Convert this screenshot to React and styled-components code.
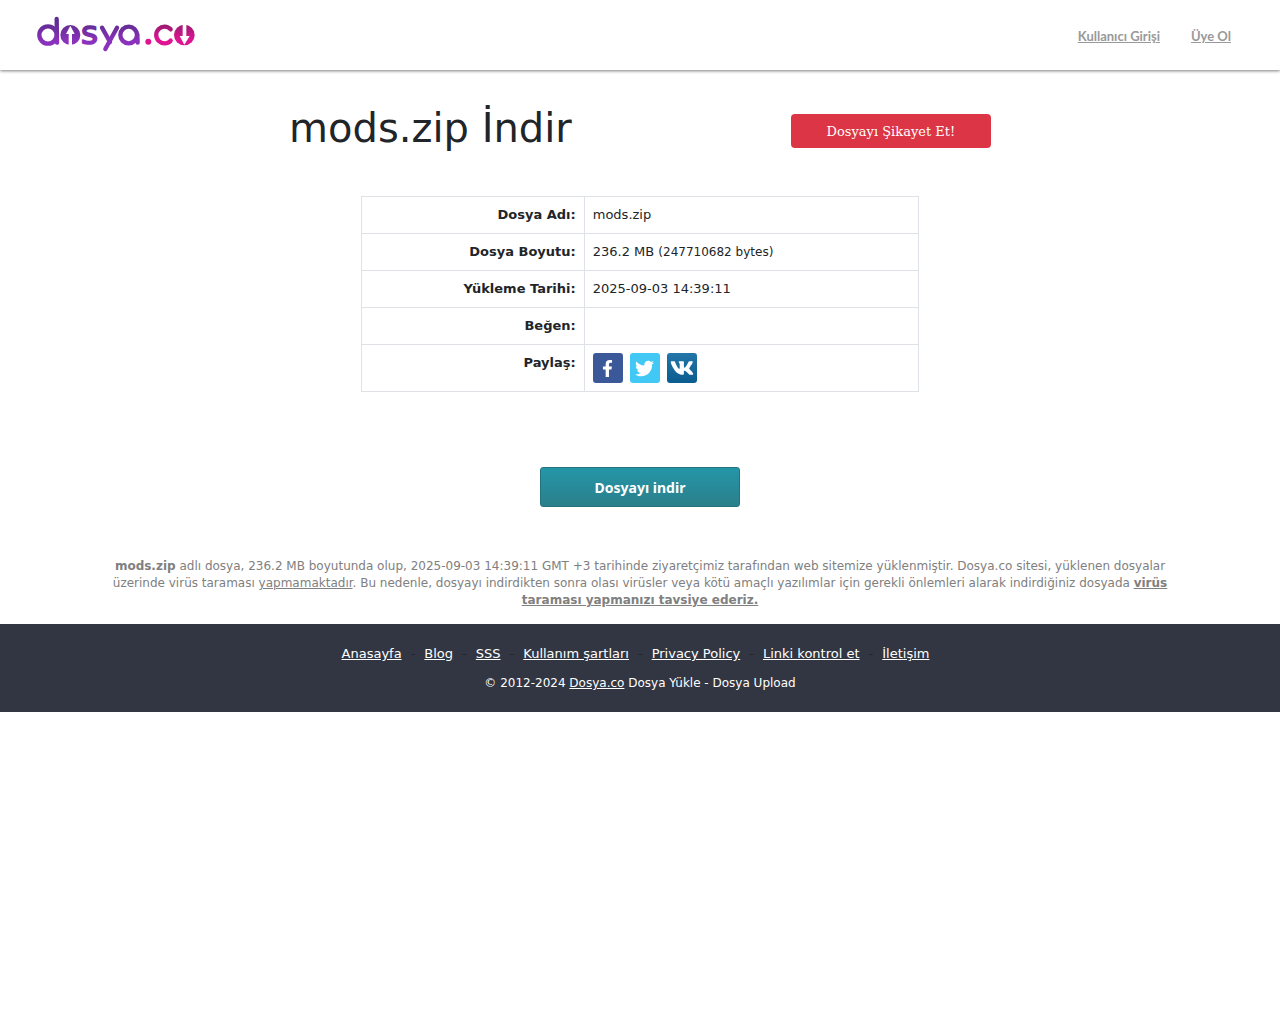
import React from 'react';
import styled, { createGlobalStyle } from 'styled-components';
import { FaFacebookF, FaTwitter, FaVk } from 'react-icons/fa';

const GlobalStyle = createGlobalStyle`
    body {
        margin: 0;
        background: #fff;
        color: #212529;
        font-family: 'DejaVu Sans', sans-serif;
        font-size: 13px;
        line-height: 20px;
    }
`;

const Header = styled.header`
    display: flex;
    align-items: center;
    justify-content: space-between;
    height: 70px;
    padding: 0 49px 0 36px;
    box-sizing: border-box;
    box-shadow: 0 1px 3px rgba(0, 0, 0, 0.5);
`;

const LogoLink = styled.a`
    display: block;
    height: 38px;
`;

const LogoSvg = styled.svg`
    overflow: visible;
`;

const UserNav = styled.nav`
    display: flex;
    gap: 31px;
    padding-top: 2px;
`;

const UserLink = styled.a`
    color: #999;
    font-family: Lato, sans-serif;
    font-size: 13px;
    font-weight: bold;
`;

const Container = styled.main`
    max-width: 1140px;
    margin: 0 auto;
    padding-top: 34px;
`;

const TitleRow = styled.div`
    display: flex;
    align-items: center;
    justify-content: space-evenly;
    margin-bottom: 38px;
`;

const Title = styled.h1`
    margin: 0;
    padding-bottom: 6px;
    font-size: 40px;
    font-weight: normal;
    line-height: 48px;
`;

const ReportButton = styled.button`
    width: 200px;
    height: 34px;
    border: 0;
    border-radius: 4px;
    background: #dc3545;
    color: #fff;
    font-family: 'DejaVu Serif', serif;
    font-size: 13px;
    cursor: pointer;
`;

const FileTable = styled.table`
    width: 49%;
    margin: 0 auto 75px;
    border-collapse: collapse;
    table-layout: fixed;
`;

const Label = styled.th`
    width: 40%;
    padding: 8px;
    border: 1px solid #dee2e6;
    box-sizing: border-box;
    text-align: right;
    vertical-align: top;
`;

const Value = styled.td`
    padding: 8px;
    border: 1px solid #dee2e6;
`;

const Small = styled.small`
    font-size: 12px;
`;

const ShareList = styled.div`
    display: flex;
    gap: 7px;
`;

const ShareLink = styled.a`
    display: flex;
    align-items: center;
    justify-content: center;
    width: 30px;
    height: 30px;
    border-radius: 3px;
    background: ${({ $bg }) => $bg};
    color: #fff;
`;

const DownloadButton = styled.button`
    display: block;
    width: 200px;
    height: 40px;
    margin: 0 auto 51px;
    border: 1px solid #24727d;
    border-radius: 3px;
    background: linear-gradient(#2496a8, #2b7f8b);
    color: #fff;
    font-family: 'Noto Sans', sans-serif;
    font-size: 14px;
    font-weight: bold;
    cursor: pointer;
`;

const Notice = styled.p`
    margin: 0;
    padding: 0 34px 15px;
    color: #808080;
    font-size: 12px;
    line-height: 17px;
    text-align: center;
`;

const Footer = styled.footer`
    padding: 20px 0 19px;
    background: #323642;
    color: #fff;
    text-align: center;
`;

const FooterLinks = styled.nav`
    display: flex;
    flex-wrap: wrap;
    justify-content: center;
    gap: 9px;
    padding-right: 9px;
    margin-bottom: 9px;
    color: #212529;
`;

const FooterLink = styled.a`
    color: #fff;
`;

const Copyright = styled.p`
    margin: 0;
    font-size: 12px;
`;

const menu = ['Anasayfa', 'Blog', 'SSS', 'Kullanım şartları', 'Privacy Policy', 'Linki kontrol et', 'İletişim'];

function Logo() {
    return (
        <LogoSvg width="160" height="38" viewBox="48 48 480 114" role="img" aria-label="dosya.co">
            <defs>
                <linearGradient id="purple" x1="0" y1="50" x2="0" y2="150" gradientUnits="userSpaceOnUse">
                    <stop offset="0.2" stopColor="#612d91" />
                    <stop offset="0.75" stopColor="#8b32bd" />
                </linearGradient>
                <linearGradient id="pink" x1="0" y1="76" x2="0" y2="136" gradientUnits="userSpaceOnUse">
                    <stop offset="0" stopColor="#9c1b71" />
                    <stop offset="0.7" stopColor="#df1493" />
                </linearGradient>
            </defs>
            <g fill="none" stroke="url(#purple)" strokeWidth="13" strokeLinecap="round">
                <circle cx="84" cy="105" r="26" />
                <line x1="110" y1="57" x2="111" y2="128" />
                <line x1="246" y1="83" x2="270" y2="126" />
                <line x1="291" y1="83" x2="256" y2="147" />
                <circle cx="326" cy="105" r="25" />
                <line x1="352" y1="103" x2="353" y2="128" />
            </g>
            <text x="183" y="132" fontFamily="DejaVu Sans, sans-serif" fontSize="98" fill="url(#purple)" stroke="url(#purple)" strokeWidth="5" strokeLinejoin="round">s</text>
            {/* upload arrow */}
            <circle cx="151" cy="105" r="30" fill="url(#purple)" />
            <path d="M151 77 L164 102 H156 V136 H146 V102 H138 Z" fill="#fff" />
            <circle cx="385" cy="125" r="9" fill="url(#pink)" />
            <path d="M452 88 A25 25 0 1 0 452 122" fill="none" stroke="url(#pink)" strokeWidth="13" strokeLinecap="round" />
            {/* download arrow */}
            <circle cx="493" cy="105" r="31" fill="url(#pink)" />
            <path d="M488 72 H499 V108 H509 L493 134 L479 108 H488 Z" fill="#fff" />
        </LogoSvg>
    );
}

export default function App() {
    return (
        <>
            <GlobalStyle />
            <Header>
                <LogoLink href="#"><Logo /></LogoLink>
                <UserNav>
                    <UserLink href="#">Kullanıcı Girişi</UserLink>
                    <UserLink href="#">Üye Ol</UserLink>
                </UserNav>
            </Header>
            <Container>
                <TitleRow>
                    <Title>mods.zip İndir</Title>
                    <ReportButton type="button">Dosyayı Şikayet Et!</ReportButton>
                </TitleRow>
                <FileTable>
                    <tbody>
                        <tr>
                            <Label scope="row">Dosya Adı:</Label>
                            <Value>mods.zip</Value>
                        </tr>
                        <tr>
                            <Label scope="row">Dosya Boyutu:</Label>
                            <Value>236.2 MB <Small>(247710682 bytes)</Small></Value>
                        </tr>
                        <tr>
                            <Label scope="row">Yükleme Tarihi:</Label>
                            <Value>2025-09-03 14:39:11</Value>
                        </tr>
                        <tr>
                            <Label scope="row">Beğen:</Label>
                            <Value />
                        </tr>
                        <tr>
                            <Label scope="row">Paylaş:</Label>
                            <Value>
                                <ShareList>
                                    <ShareLink href="#" aria-label="Facebook" $bg="#3b5998"><FaFacebookF size={17} /></ShareLink>
                                    <ShareLink href="#" aria-label="Twitter" $bg="#41c8f5"><FaTwitter size={19} /></ShareLink>
                                    <ShareLink href="#" aria-label="VK" $bg="linear-gradient(#2475a8, #0b5c8e)"><FaVk size={24} /></ShareLink>
                                </ShareList>
                            </Value>
                        </tr>
                    </tbody>
                </FileTable>
                <DownloadButton type="button">Dosyayı indir</DownloadButton>
                <Notice>
                    <b>mods.zip</b> adlı dosya, 236.2 MB boyutunda olup, 2025-09-03 14:39:11 GMT +3 tarihinde ziyaretçimiz
                    tarafından web sitemize yüklenmiştir. Dosya.co sitesi, yüklenen dosyalar üzerinde virüs
                    taraması <u>yapmamaktadır</u>. Bu nedenle, dosyayı indirdikten sonra olası virüsler veya kötü amaçlı
                    yazılımlar için gerekli önlemleri alarak indirdiğiniz dosyada <b><u>virüs taraması yapmanızı tavsiye ederiz.</u></b>
                </Notice>
            </Container>
            <Footer>
                <FooterLinks>
                    {menu.map((item, i) => (
                        <React.Fragment key={item}>
                            {i > 0 && <span>-</span>}
                            <FooterLink href="#">{item}</FooterLink>
                        </React.Fragment>
                    ))}
                </FooterLinks>
                <Copyright>© 2012-2024 <FooterLink href="#">Dosya.co</FooterLink> Dosya Yükle - Dosya Upload</Copyright>
            </Footer>
        </>
    );
}
